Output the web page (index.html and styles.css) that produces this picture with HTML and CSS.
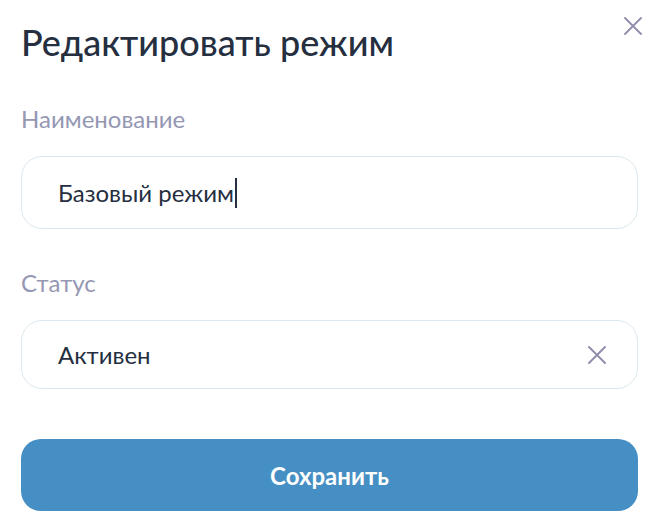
FILE: index.html
```html
<!DOCTYPE html>
<html lang="ru">
<head>
<meta charset="utf-8">
<link rel="stylesheet" href="styles.css">
</head>
<body>
<div class="dialog">
  <div class="header">
    <h1 class="title">Редактировать режим</h1>
    <button class="close" aria-label="Закрыть">
      <svg width="18" height="18" viewBox="0 0 18 18"><path d="M1 1L17 17M17 1L1 17" stroke="#8f8dab" stroke-width="1.8" stroke-linecap="round"/></svg>
    </button>
  </div>
  <div class="label">Наименование</div>
  <div class="field field-text"><span class="value">Базовый режим</span><span class="caret"></span></div>
  <div class="label label-next">Статус</div>
  <div class="field field-select">
    <span class="value">Активен</span>
    <svg class="clear" width="18" height="18" viewBox="0 0 18 18"><path d="M1 1L17 17M17 1L1 17" stroke="#8f8dab" stroke-width="1.9" stroke-linecap="round"/></svg>
  </div>
  <button class="save">Сохранить</button>
</div>
</body>
</html>
```
FILE: styles.css
```css
html, body {
  margin: 0;
  padding: 0;
  background: #ffffff;
}
body {
  font-family: Lato, "Noto Sans", sans-serif;
  color: #252f3f;
}
.dialog {
  width: 660px;
  box-sizing: border-box;
  padding: 20px 22px 0 21px;
  display: flex;
  flex-direction: column;
}
.header {
  display: flex;
  justify-content: space-between;
  align-items: flex-start;
}
.title {
  margin: 0;
  font-size: 36px;
  line-height: 44px;
  font-weight: 500;
  color: #252f3f;
}
.close {
  border: 0;
  background: none;
  padding: 0;
  margin: -3px -4px 0 0;
  width: 18px;
  height: 18px;
  display: flex;
}
.label {
  margin-top: 40px;
  margin-bottom: 22px;
  font-size: 24px;
  line-height: 30px;
  color: #9597b3;
}
.label-next {
  margin-top: 39px;
}
.field {
  box-sizing: border-box;
  border: 1px solid #dbe8ef;
  border-radius: 21px;
  display: flex;
  align-items: center;
  padding: 0 31px 0 36px;
  font-size: 24px;
  color: #252f3f;
}
.field-text {
  height: 73px;
}
.field-select {
  height: 69px;
  justify-content: space-between;
}
.caret {
  display: inline-block;
  width: 2px;
  height: 30px;
  background: #252f3f;
  margin-left: 1px;
}
.clear {
  display: block;
}
.save {
  margin-top: 50px;
  height: 72px;
  border: 0;
  border-radius: 20px;
  background: #468fc4;
  color: #ffffff;
  font-family: Lato, "Noto Sans", sans-serif;
  font-size: 24px;
  font-weight: 700;
}
```
